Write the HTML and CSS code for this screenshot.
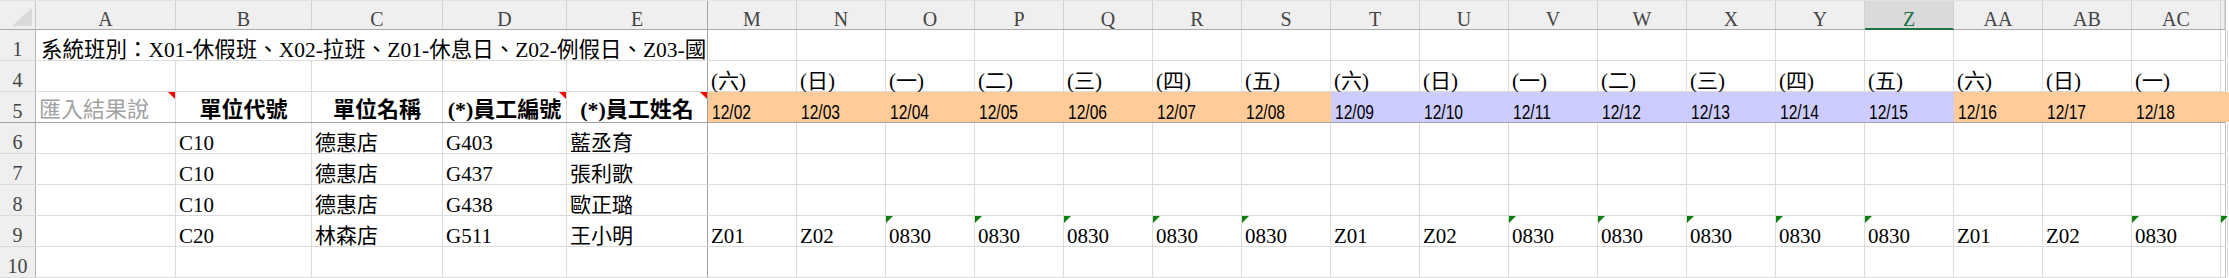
FILE: index.html
```html
<!DOCTYPE html>
<html lang="zh-Hant">
<head>
<meta charset="UTF-8" />
<title>排班匯入</title>
<link rel="stylesheet" href="styles.css">
</head>
<body>

<div class="sheet">
  <!-- Column letters -->
  <div class="row head">
    <div class="corner"></div>
    <div class="col">A</div><div class="col">B</div><div class="col">C</div><div class="col">D</div><div class="col fz">E</div>
    <div class="col">M</div><div class="col">N</div><div class="col">O</div><div class="col">P</div><div class="col">Q</div><div class="col">R</div><div class="col">S</div>
    <div class="col">T</div><div class="col">U</div><div class="col">V</div><div class="col">W</div><div class="col">X</div><div class="col">Y</div><div class="col sel">Z</div>
    <div class="col">AA</div><div class="col">AB</div><div class="col">AC</div><div class="col"></div>
  </div>

  <div class="row">
    <div class="rh">1</div>
    <div class="c fz wide">系統班別：X01-休假班、X02-拉班、Z01-休息日、Z02-例假日、Z03-國定假日</div>
    <div class="c"></div><div class="c"></div><div class="c"></div><div class="c"></div><div class="c"></div><div class="c"></div><div class="c"></div>
    <div class="c"></div><div class="c"></div><div class="c"></div><div class="c"></div><div class="c"></div><div class="c"></div><div class="c"></div>
    <div class="c"></div><div class="c"></div><div class="c"></div><div class="c"></div>
  </div>

  <div class="row">
    <div class="rh">4</div>
    <div class="c"></div><div class="c"></div><div class="c"></div><div class="c"></div><div class="c fz"></div>
    <div class="c">(六)</div><div class="c">(日)</div><div class="c">(一)</div><div class="c">(二)</div><div class="c">(三)</div><div class="c">(四)</div><div class="c">(五)</div>
    <div class="c">(六)</div><div class="c">(日)</div><div class="c">(一)</div><div class="c">(二)</div><div class="c">(三)</div><div class="c">(四)</div><div class="c">(五)</div>
    <div class="c">(六)</div><div class="c">(日)</div><div class="c">(一)</div><div class="c"></div>
  </div>

  <div class="row freeze">
    <div class="rh">5</div>
    <div class="c title muted note">匯入結果說</div>
    <div class="c title th">單位代號</div>
    <div class="c title th">單位名稱</div>
    <div class="c title th note">(*)員工編號</div>
    <div class="c title th note fz">(*)員工姓名</div>
    <div class="c date orange"><span>12/02</span></div><div class="c date orange"><span>12/03</span></div><div class="c date orange"><span>12/04</span></div>
    <div class="c date orange"><span>12/05</span></div><div class="c date orange"><span>12/06</span></div><div class="c date orange"><span>12/07</span></div>
    <div class="c date orange"><span>12/08</span></div>
    <div class="c date lilac"><span>12/09</span></div><div class="c date lilac"><span>12/10</span></div><div class="c date lilac"><span>12/11</span></div>
    <div class="c date lilac"><span>12/12</span></div><div class="c date lilac"><span>12/13</span></div><div class="c date lilac"><span>12/14</span></div>
    <div class="c date lilac"><span>12/15</span></div>
    <div class="c date orange"><span>12/16</span></div><div class="c date orange"><span>12/17</span></div><div class="c date orange"><span>12/18</span></div>
    <div class="c date orange"></div>
  </div>

  <div class="row">
    <div class="rh">6</div>
    <div class="c"></div><div class="c">C10</div><div class="c">德惠店</div><div class="c">G403</div><div class="c fz">藍丞育</div>
    <div class="c"></div><div class="c"></div><div class="c"></div><div class="c"></div><div class="c"></div><div class="c"></div><div class="c"></div>
    <div class="c"></div><div class="c"></div><div class="c"></div><div class="c"></div><div class="c"></div><div class="c"></div><div class="c"></div>
    <div class="c"></div><div class="c"></div><div class="c"></div><div class="c"></div>
  </div>

  <div class="row">
    <div class="rh">7</div>
    <div class="c"></div><div class="c">C10</div><div class="c">德惠店</div><div class="c">G437</div><div class="c fz">張利歌</div>
    <div class="c"></div><div class="c"></div><div class="c"></div><div class="c"></div><div class="c"></div><div class="c"></div><div class="c"></div>
    <div class="c"></div><div class="c"></div><div class="c"></div><div class="c"></div><div class="c"></div><div class="c"></div><div class="c"></div>
    <div class="c"></div><div class="c"></div><div class="c"></div><div class="c"></div>
  </div>

  <div class="row">
    <div class="rh">8</div>
    <div class="c"></div><div class="c">C10</div><div class="c">德惠店</div><div class="c">G438</div><div class="c fz">歐正璐</div>
    <div class="c"></div><div class="c"></div><div class="c"></div><div class="c"></div><div class="c"></div><div class="c"></div><div class="c"></div>
    <div class="c"></div><div class="c"></div><div class="c"></div><div class="c"></div><div class="c"></div><div class="c"></div><div class="c"></div>
    <div class="c"></div><div class="c"></div><div class="c"></div><div class="c"></div>
  </div>

  <div class="row">
    <div class="rh">9</div>
    <div class="c"></div><div class="c">C20</div><div class="c">林森店</div><div class="c">G511</div><div class="c fz">王小明</div>
    <div class="c">Z01</div><div class="c">Z02</div>
    <div class="c as-text">0830</div><div class="c as-text">0830</div><div class="c as-text">0830</div><div class="c as-text">0830</div><div class="c as-text">0830</div>
    <div class="c">Z01</div><div class="c">Z02</div>
    <div class="c as-text">0830</div><div class="c as-text">0830</div><div class="c as-text">0830</div><div class="c as-text">0830</div><div class="c as-text">0830</div>
    <div class="c">Z01</div><div class="c">Z02</div>
    <div class="c as-text">0830</div><div class="c as-text"></div>
  </div>

  <div class="row">
    <div class="rh">10</div>
    <div class="c"></div><div class="c"></div><div class="c"></div><div class="c"></div><div class="c fz"></div>
    <div class="c"></div><div class="c"></div><div class="c"></div><div class="c"></div><div class="c"></div><div class="c"></div><div class="c"></div>
    <div class="c"></div><div class="c"></div><div class="c"></div><div class="c"></div><div class="c"></div><div class="c"></div><div class="c"></div>
    <div class="c"></div><div class="c"></div><div class="c"></div><div class="c"></div>
  </div>
</div>

</body>
</html>
```

FILE: styles.css
```css
:root {
  --grid: #dcdcdc;
  --freeze: #a3a3a3;
  --head-bg: #efefef;
  --head-line: #d2d2d2;
  --head-text: #444;
  --excel-green: #217346;
  --orange: #ffcc99;
  --lilac: #ccccff;
}
*, *::before, *::after {
  box-sizing: border-box;
}
html, body {
  margin: 0;
  padding: 0;
  background: #fff;
}

/* Sheet */
.sheet {
  width: 2226px;
  border-right: 1px solid #c4c4c4;
  font-family: "Liberation Serif", "Noto Sans CJK TC", serif;
  color: #000;
}
.row {
  display: grid;
  grid-template-columns: 36px 140px 136px 131px 124px 141px repeat(17, 89px) 1fr;
  height: 31px;
  border-bottom: 1px solid var(--grid);
}
.row.freeze {
  border-bottom-color: var(--freeze);
}
/* the half-visible column at the window edge */
.row > :last-child {
  overflow: hidden;
}

/* Column letters */
.head {
  height: 30px;
  background: var(--head-bg);
  border-top: 1px solid #e2e2e2;
  border-bottom-color: #ababab;
}
.corner {
  position: relative;
  border-right: 1px solid #c8c8c8;
}
.corner::after {
  content: "";
  position: absolute;
  right: 3px;
  bottom: 3px;
  border-left: 20px solid transparent;
  border-bottom: 18px solid #d9d9d9;
}
.col {
  display: flex;
  align-items: flex-end;
  justify-content: center;
  border-right: 1px solid var(--head-line);
  font-size: 20px;
  line-height: 20px;
  color: var(--head-text);
}
.col.sel {
  background: #dadada;
  color: var(--excel-green);
  box-shadow: 0 1px 0 var(--excel-green), inset 0 -1px 0 var(--excel-green);
}

/* Row numbers */
.rh {
  display: flex;
  align-items: flex-end;
  justify-content: center;
  padding-bottom: 1px;
  background: var(--head-bg);
  border-right: 1px solid #b4b4b4;
  font-size: 20px;
  line-height: 20px;
  color: var(--head-text);
}

/* Cells */
.c {
  position: relative;
  display: flex;
  align-items: flex-end;
  padding: 0 3px;
  border-right: 1px solid var(--grid);
  font-size: 21px;
  line-height: 20px;
  white-space: nowrap;
}
.c.fz,
.col.fz {
  border-right-color: var(--freeze);
}
.c.wide {
  grid-column: span 5;
  padding-left: 5px;
  font-size: 21.5px;
  overflow: hidden;
}
.c.title {
  font-size: 22px;
  padding-bottom: 2px;
}
.c.th {
  justify-content: center;
  font-weight: 700;
}
.c.muted {
  color: #a2a2a2;
}
.c.date {
  font-family: "Liberation Sans", sans-serif;
  font-size: 20px;
  padding-left: 4px;
}
.c.date span {
  display: inline-block;
  transform: scaleX(0.78);
  transform-origin: left bottom;
}
.c.orange {
  background: var(--orange);
  border-right-color: var(--orange);
}
.c.lilac {
  background: var(--lilac);
  border-right-color: var(--lilac);
}

/* Comment marker and number-as-text marker */
.c.note::after {
  content: "";
  position: absolute;
  top: 0;
  right: 0;
  border-top: 7px solid #ff0000;
  border-left: 7px solid transparent;
}
.c.as-text::before {
  content: "";
  position: absolute;
  top: 0;
  left: 0;
  border-top: 7px solid #0a7d0a;
  border-right: 7px solid transparent;
}
```
